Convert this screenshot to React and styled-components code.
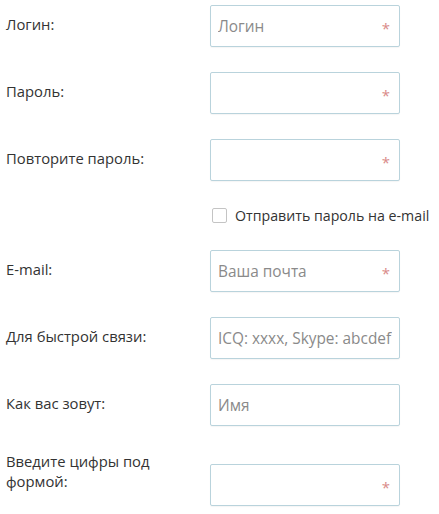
import React from "react";
import styled, { createGlobalStyle } from "styled-components";

const Global = createGlobalStyle`
  html, body { margin: 0; padding: 0; background: #fff; }
  body { font-family: "Open Sans", "Noto Sans", sans-serif; color: #333; }
  * { box-sizing: border-box; }
`;

const Form = styled.form`
  width: 439px;
  padding: 5px 0 0 6px;
  display: flex;
  flex-direction: column;
`;

const Row = styled.div`
  display: flex;
  align-items: flex-start;
  margin-bottom: ${(p) => p.$mb ?? 25}px;
`;

const Label = styled.label`
  width: 204px;
  flex: none;
  font-size: 14.8px;
  line-height: 20px;
  padding-top: ${(p) => p.$pt ?? 9}px;
  color: #333;
`;

const Field = styled.div`
  position: relative;
  width: 190px;
  height: 42px;
  margin-top: ${(p) => p.$mt ?? 0}px;
`;

const Input = styled.input`
  width: 100%;
  height: 100%;
  border: 1px solid #b9d3dc;
  border-radius: 2px;
  background: #fff;
  padding: 0 7px;
  font-family: "Open Sans", "Noto Sans", sans-serif;
  font-size: 15.4px;
  color: #333;
  outline: none;
  box-shadow: 0 1px 1px rgba(0, 0, 0, 0.04);
  &::placeholder { color: #8a8a8a; opacity: 1; }
`;

const Req = styled.span`
  position: absolute;
  right: 10px;
  top: 13px;
  font-size: 15px;
  line-height: 20px;
  color: #d98a88;
  pointer-events: none;
`;

const CheckRow = styled.label`
  display: flex;
  align-items: center;
  gap: 8px;
  margin-left: 206px;
  margin-bottom: 24px;
  font-size: 14.2px;
  line-height: 20px;
  color: #333;
  white-space: nowrap;
`;

const Box = styled.span`
  width: 15px;
  height: 15px;
  border: 1px solid #c4c4c4;
  border-radius: 2px;
  background: #fff;
  flex: none;
  margin-top: -2px;
`;

function FormRow({ label, placeholder, required, type = "text", labelPt, fieldMt }) {
  return (
    <Row>
      <Label $pt={labelPt}>{label}</Label>
      <Field $mt={fieldMt}>
        <Input type={type} placeholder={placeholder} />
        {required && <Req>*</Req>}
      </Field>
    </Row>
  );
}

export default function App() {
  return (
    <>
      <Global />
      <Form onSubmit={(e) => e.preventDefault()}>
        <FormRow label="Логин:" placeholder="Логин" required />
        <FormRow label="Пароль:" type="password" required />
        <FormRow label="Повторите пароль:" type="password" required />
        <CheckRow>
          <Box />
          Отправить пароль на e-mail
        </CheckRow>
        <FormRow label="E-mail:" placeholder="Ваша почта" required />
        <FormRow label="Для быстрой связи:" placeholder="ICQ: xxxx, Skype: abcdef" />
        <FormRow label="Как вас зовут:" placeholder="Имя" />
        <FormRow label={<>Введите цифры под<br />формой:</>} required labelPt={0} fieldMt={13} />
      </Form>
    </>
  );
}
